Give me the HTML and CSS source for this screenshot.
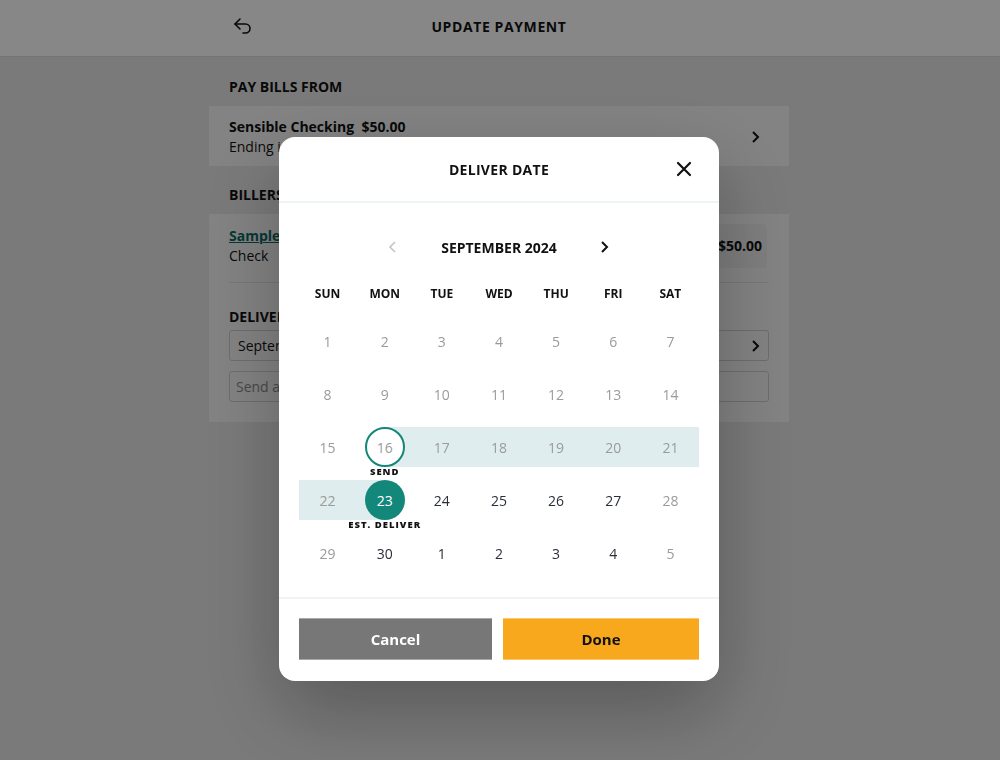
FILE: index.html
```html
<!DOCTYPE html>
<html lang="en">
<head>
    <meta charset="UTF-8">
    <meta name="viewport" content="width=device-width, initial-scale=1.0">
    <title>Update Payment</title>
    <link rel="stylesheet" href="styles.css">
</head>
<body>

<header class="topbar">
    <div class="topbar-inner">
        <svg class="back" width="22" height="22" viewBox="0 0 22 22" fill="none" stroke="#111" stroke-width="1.6" stroke-linecap="round" stroke-linejoin="round">
            <path d="M8 4 L3 9 L8 14"/>
            <path d="M3 9 H13.5 a4.5 4.5 0 0 1 0 9 H11"/>
        </svg>
        <h1>Update Payment</h1>
    </div>
</header>

<main class="page">
    <h2 class="section-title">Pay Bills From</h2>
    <div class="card row-card">
        <div>
            <div class="strong">Sensible Checking&nbsp; $50.00</div>
            <div>Ending in 1234</div>
        </div>
        <svg width="12" height="14" viewBox="0 0 12 14" fill="none" stroke="#111" stroke-width="2"><path d="M3 2 L8 7 L3 12"/></svg>
    </div>

    <h2 class="section-title">Billers</h2>
    <div class="card">
        <div class="biller">
            <div>
                <a class="link" href="#">Sample Biller</a>
                <div>Check</div>
            </div>
            <div class="amount">$50.00</div>
        </div>
        <div class="divider"></div>
        <h2 class="section-title inner">Deliver Date</h2>
        <div class="field select">
            <span>September 23, 2024</span>
            <svg width="12" height="14" viewBox="0 0 12 14" fill="none" stroke="#111" stroke-width="2"><path d="M3 2 L8 7 L3 12"/></svg>
        </div>
        <div class="field placeholder">Send a memo</div>
    </div>
</main>

<div class="overlay">
    <div class="modal">
        <div class="modal-head">
            <h3>Deliver Date</h3>
            <svg class="close" width="16" height="16" viewBox="0 0 16 16" stroke="#111" stroke-width="2.2" stroke-linecap="round"><path d="M2 2 L14 14 M14 2 L2 14"/></svg>
        </div>

        <div class="calendar">
            <div class="month-nav">
                <svg width="12" height="14" viewBox="0 0 12 14" fill="none" stroke="#c4c4c4" stroke-width="1.6"><path d="M8 2 L3 7 L8 12"/></svg>
                <span class="month">September 2024</span>
                <svg width="12" height="14" viewBox="0 0 12 14" fill="none" stroke="#111" stroke-width="2"><path d="M3 2 L8 7 L3 12"/></svg>
            </div>
            <div class="weekdays">
                <span>Sun</span><span>Mon</span><span>Tue</span><span>Wed</span><span>Thu</span><span>Fri</span><span>Sat</span>
            </div>
            <div class="days" id="days"></div>
        </div>

        <div class="modal-foot">
            <button class="btn cancel">Cancel</button>
            <button class="btn done">Done</button>
        </div>
    </div>
</div>

<script>
    // Kalendertage fuer September 2024 aufbauen
    const days = [];
    for (let d = 1; d <= 30; d++) days.push({ n: d, cur: true });
    for (let d = 1; d <= 5; d++) days.push({ n: d, cur: false });

    const grid = document.getElementById('days');
    days.forEach(function (day, i) {
        const col = i % 7;
        const cell = document.createElement('div');
        cell.className = 'day';
        const off = day.cur && (day.n < 23 || col === 0 || col === 6);
        const weekendNext = !day.cur && col === 6;
        if (off || weekendNext) cell.classList.add('off');

        if (day.cur && day.n > 16 && day.n < 23) cell.classList.add('band');
        if (day.cur && day.n === 16) cell.classList.add('band-right');
        if (day.cur && day.n === 23) cell.classList.add('band-left');

        const num = document.createElement('span');
        num.className = 'num';
        num.innerText = day.n;
        cell.appendChild(num);

        if (day.cur && day.n === 16) {
            num.classList.add('send');
            cell.insertAdjacentHTML('beforeend', '<span class="tag">SEND</span>');
        }
        if (day.cur && day.n === 23) {
            num.classList.add('deliver');
            cell.insertAdjacentHTML('beforeend', '<span class="tag">EST. DELIVER</span>');
        }
        grid.appendChild(cell);
    });
</script>

</body>
</html>
```

FILE: styles.css
```css
* {
    box-sizing: border-box;
}
body {
    font-family: "Open Sans", "Noto Sans", sans-serif;
    background-color: #e7e7e7;
    color: #111;
    margin: 0;
    padding: 0 2px 0 0;
    font-size: 14px;
}
.topbar {
    height: 57px;
    background-color: #ffffff;
    border-bottom: 1px solid #dcdcdc;
    margin-right: -2px;
}
.topbar-inner {
    width: 580px;
    margin: 0 auto;
    height: 100%;
    display: flex;
    align-items: center;
    justify-content: center;
    position: relative;
    padding-bottom: 4px;
    left: -1px;
}
.topbar .back {
    position: absolute;
    left: 23px;
    top: 15px;
}
.topbar h1 {
    margin: 0;
    font-size: 14px;
    font-weight: 700;
    text-transform: uppercase;
    letter-spacing: 0.6px;
}
.page {
    width: 580px;
    margin: 0 auto;
    padding-top: 20px;
}
.section-title {
    margin: 0;
    padding: 0 20px;
    height: 29px;
    line-height: 20px;
    font-size: 14px;
    font-weight: 700;
    text-transform: uppercase;
}
.section-title.inner {
    padding: 0;
    height: 23px;
}
.card {
    background-color: #f8f8f8;
    padding: 10px 20px 20px;
    margin-bottom: 19px;
}
.row-card {
    display: flex;
    align-items: center;
    justify-content: space-between;
    height: 60px;
    padding: 1px 27px 0 20px;
    line-height: 20px;
}
.strong {
    font-weight: 700;
}
.biller {
    display: flex;
    justify-content: space-between;
    align-items: center;
    line-height: 20px;
    margin-right: 2px;
}
.link {
    color: #0d6b63;
    font-weight: 700;
    text-decoration: underline;
}
.amount {
    background-color: #efefef;
    border-radius: 4px;
    height: 44px;
    padding: 0 5px 0 40px;
    display: flex;
    align-items: center;
    font-weight: 700;
}
.divider {
    height: 1px;
    background-color: #e2e2e2;
    margin: 14px 0 24px;
}
.field {
    height: 31px;
    border: 1px solid #cfcfcf;
    border-radius: 3px;
    background-color: #f8f8f8;
    display: flex;
    align-items: center;
    justify-content: space-between;
    padding: 0 6px 0 8px;
    margin-bottom: 10px;
}
.field:last-child {
    margin-bottom: 0;
}
.placeholder {
    color: #8a8a8a;
    padding-left: 6px;
}

/* Dialog */
.overlay {
    position: fixed;
    inset: 0;
    background-color: rgba(0, 0, 0, 0.47);
    display: flex;
    justify-content: center;
    align-items: flex-start;
    padding: 137px 2px 0 0;
}
.modal {
    width: 440px;
    background-color: #fff;
    border-radius: 16px;
    box-shadow: 0 30px 80px rgba(0, 0, 0, 0.28);
    overflow: hidden;
}
.modal-head {
    height: 66px;
    display: flex;
    align-items: center;
    justify-content: center;
    position: relative;
    border-bottom: 2px solid #eef3f6;
}
.modal-head h3 {
    margin: 0;
    font-size: 14px;
    font-weight: 700;
    text-transform: uppercase;
    letter-spacing: 0.3px;
}
.modal-head .close {
    position: absolute;
    right: 27px;
    top: 24px;
}
.calendar {
    padding: 32px 20px 24px;
}
.month-nav {
    height: 24px;
    display: flex;
    align-items: center;
    justify-content: center;
    gap: 40px;
}
.month {
    font-size: 14px;
    font-weight: 700;
    text-transform: uppercase;
    width: 120px;
    text-align: center;
}
.weekdays {
    display: grid;
    grid-template-columns: repeat(7, 1fr);
    margin-top: 25px;
    height: 20px;
    line-height: 20px;
    text-align: center;
    font-size: 12px;
    font-weight: 700;
    text-transform: uppercase;
}
.days {
    display: grid;
    grid-template-columns: repeat(7, 1fr);
    row-gap: 13px;
    margin-top: 17px;
}
.day {
    height: 40px;
    display: flex;
    justify-content: center;
    align-items: center;
    position: relative;
    color: #2a2f38;
    font-size: 14px;
}
.day.off {
    color: #9b9b9b;
}
.day.band {
    background-color: #dfedee;
}
.day.band-right {
    background: linear-gradient(to right, transparent 50%, #dfedee 50%);
}
.day.band-left {
    background: linear-gradient(to right, #dfedee 50%, transparent 50%);
}
.num {
    width: 40px;
    height: 40px;
    border-radius: 50%;
    display: flex;
    align-items: center;
    justify-content: center;
    position: relative;
}
.num.send {
    background-color: #fff;
    border: 2px solid #14877b;
}
.num.deliver {
    background-color: #14877b;
    color: #fff;
}
.tag {
    position: absolute;
    top: 38px;
    left: 50%;
    transform: translateX(-50%);
    white-space: nowrap;
    font-size: 9.5px;
    font-weight: 800;
    letter-spacing: 1px;
    color: #111;
}
.modal-foot {
    border-top: 2px solid #f3f3f3;
    padding: 19px 20px 21px;
    display: flex;
    gap: 11px;
}
.btn {
    height: 42px;
    border: none;
    font-family: inherit;
    font-size: 15px;
    font-weight: 700;
    cursor: pointer;
}
.btn.cancel {
    width: 193px;
    background-color: #767776;
    color: #fff;
    border-top: 1px solid #a8a8a8;
    border-bottom: 1px solid #a8a8a8;
}
.btn.done {
    flex: 1;
    background-color: #f7a81c;
    color: #111;
    border-top: 1px solid #fbc76a;
    border-bottom: 1px solid #fbc76a;
}
```
